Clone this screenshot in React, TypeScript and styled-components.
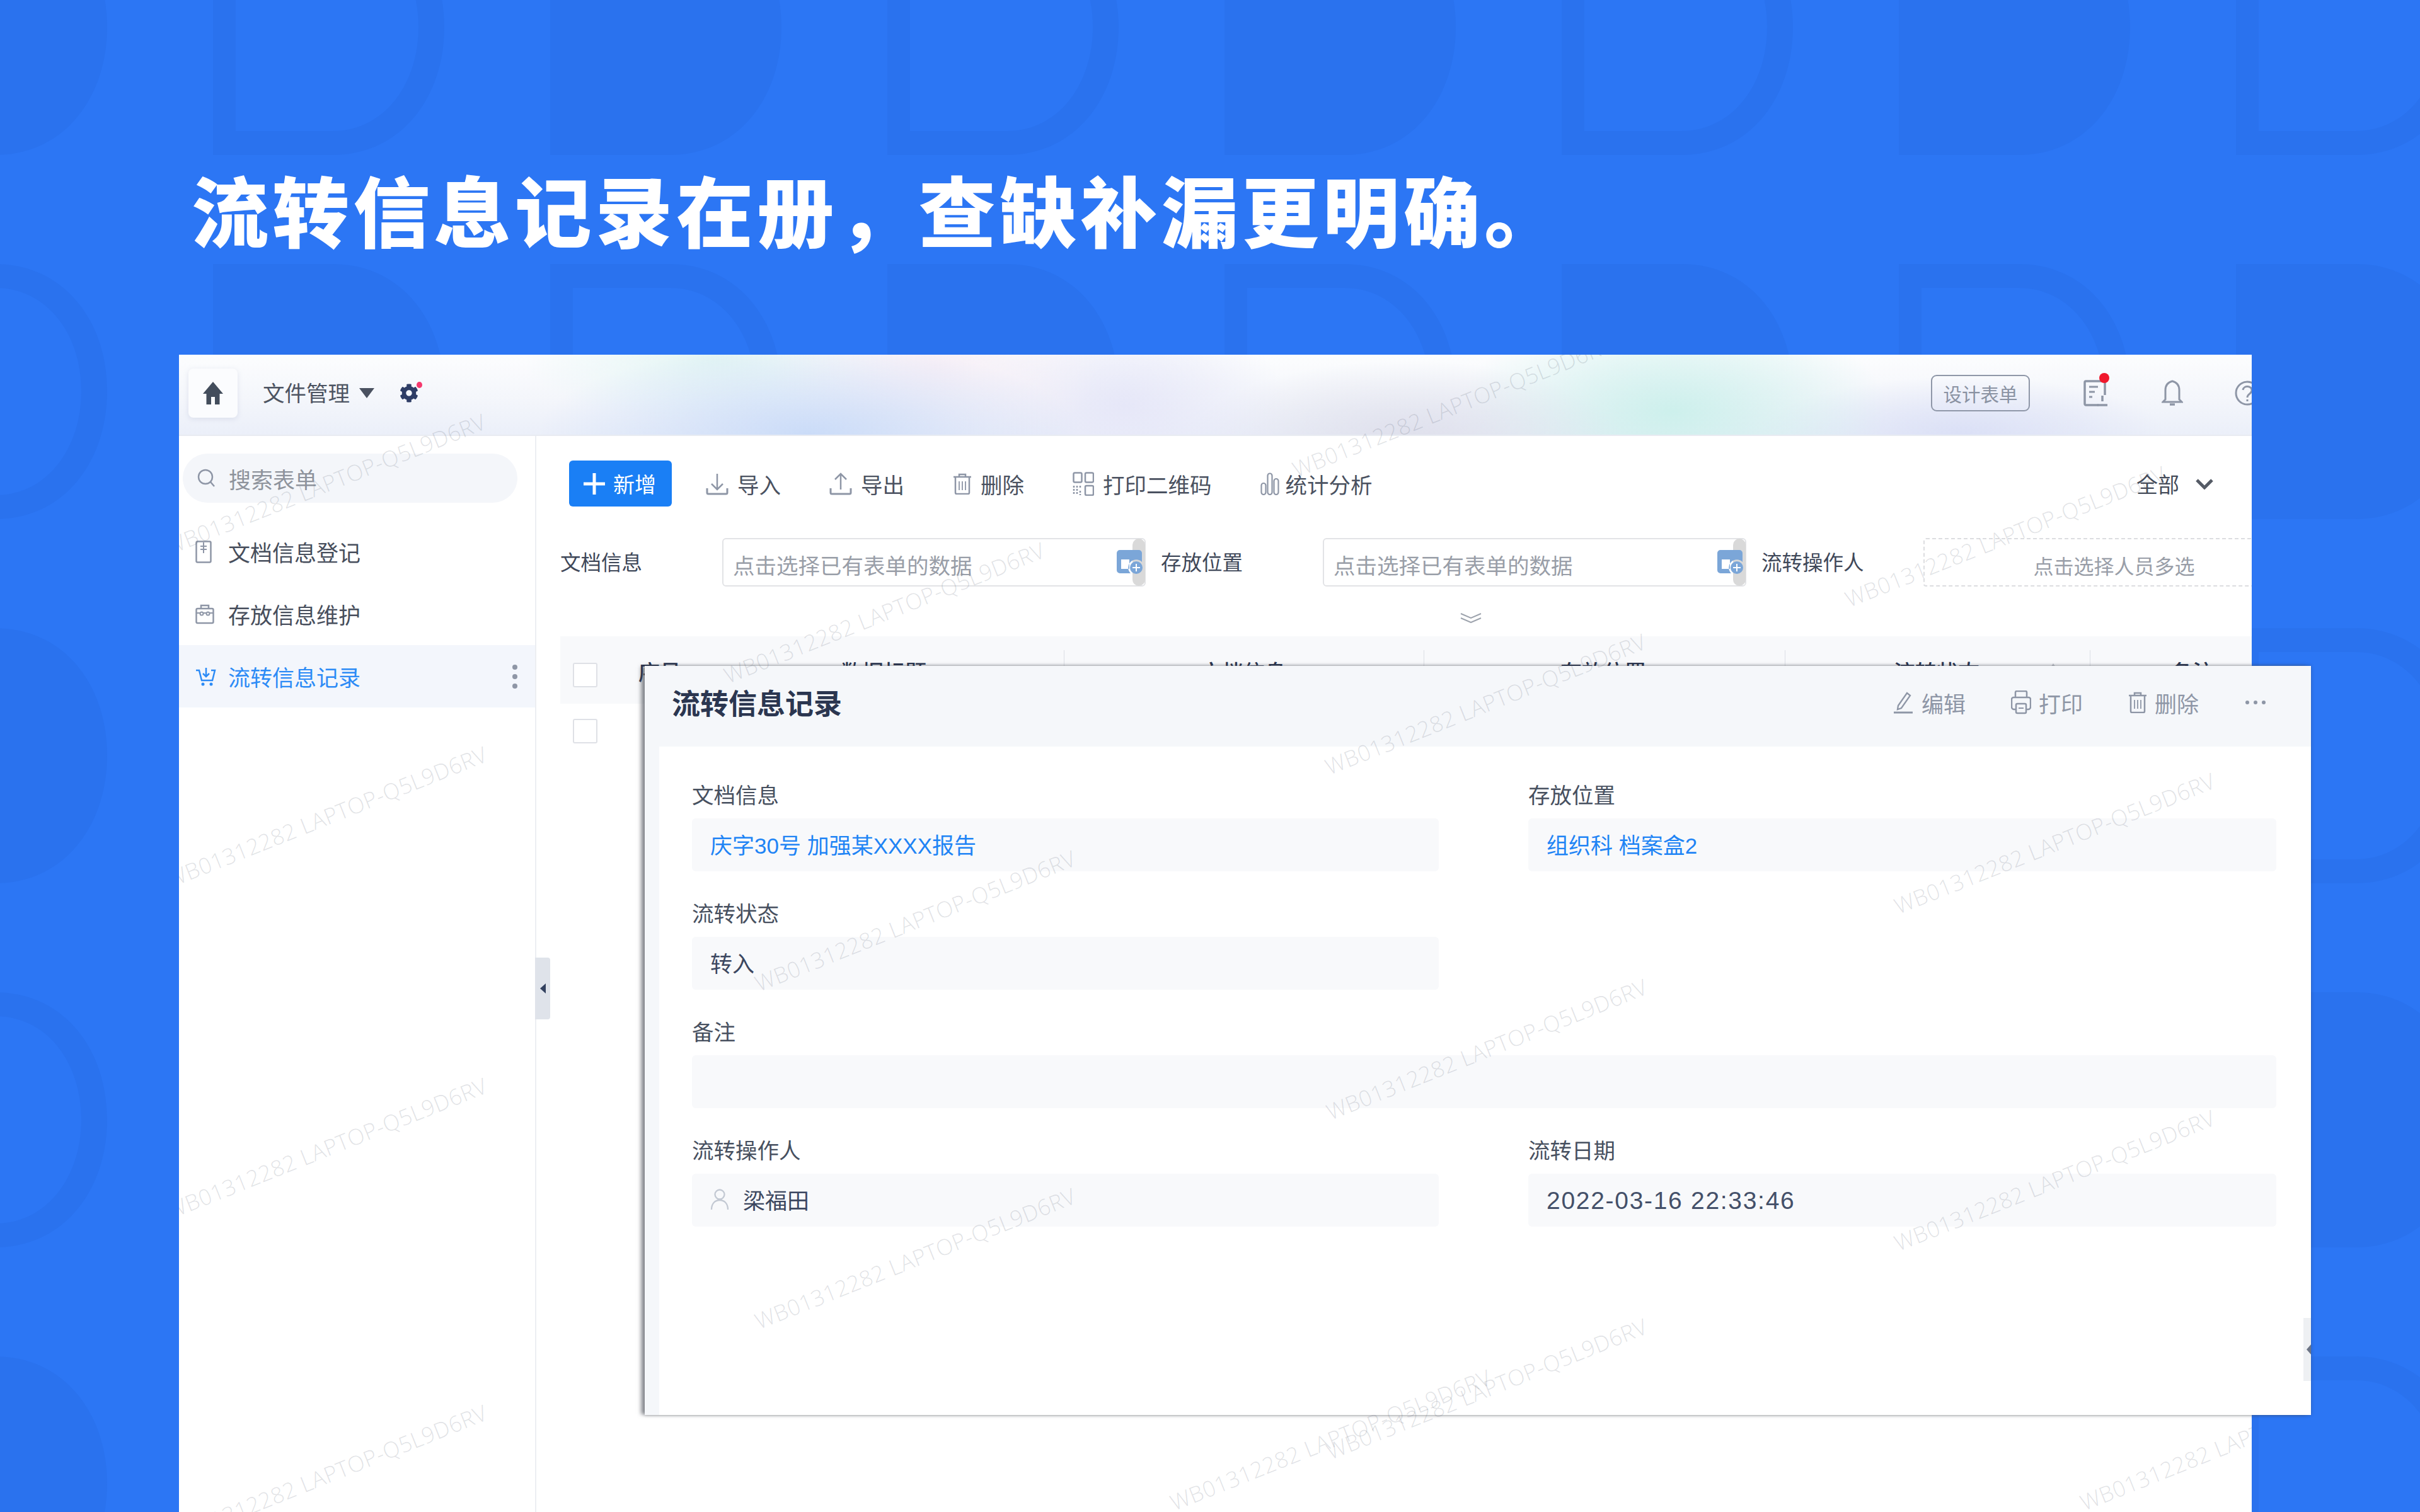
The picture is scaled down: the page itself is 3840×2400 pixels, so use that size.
import React from 'react';
import styled, { createGlobalStyle } from 'styled-components';
import { FaCog } from 'react-icons/fa';

const FONT = `"Liberation Sans", "Noto Sans CJK SC", sans-serif`;
const CJK = `"Noto Sans CJK SC", sans-serif`;
const GREY = '#8e96a6';

const Global = createGlobalStyle`
  html, body { margin: 0; padding: 0; background: #2c76f4; }
  body { font-family: ${FONT}; font-size: 34px; color: #3c4658; }
  * { box-sizing: border-box; }
`;

const Page = styled.div`
  position: relative;
  width: 3840px;
  height: 2400px;
  overflow: hidden;
  background: #2c76f4;
`;
const Pattern = styled.svg`
  position: absolute;
  inset: 0;
  width: 3840px;
  height: 2400px;
`;
const Hero = styled.header`
  position: relative;
  height: 563px;
  padding: 248px 0 0 304px;
`;
const Title = styled.h1`
  margin: 0;
  font-family: ${CJK};
  font-size: 122px;
  line-height: 164px;
  font-weight: 900;
  letter-spacing: 6.2px;
  color: #fff;
  white-space: nowrap;
`;
const AppWindow = styled.div`
  position: relative;
  margin-left: 284px;
  width: 3289px;
  height: 1837px;
  display: flex;
  flex-direction: column;
  overflow: hidden;
  background: #fff;
`;
const TopBar = styled.div`
  height: 129px;
  flex: none;
  display: flex;
  align-items: center;
  padding: 0 0 6px 15px;
  border-bottom: 2px solid #e8ebf1;
  background:
    radial-gradient(ellipse 430px 140px at 1000px 125px, #cbdcf8 0%, rgba(203,220,248,0) 100%),
    radial-gradient(ellipse 260px 150px at 1200px 20px, rgba(246,238,246,.95) 0%, rgba(246,238,246,0) 100%),
    radial-gradient(ellipse 260px 150px at 1500px 80px, #e6e7f8 0%, rgba(230,231,248,0) 100%),
    radial-gradient(ellipse 340px 120px at 1950px 130px, #dfe0ec 0%, rgba(223,224,236,0) 100%),
    radial-gradient(ellipse 340px 170px at 2370px 90px, #cdf0ec 0%, rgba(205,240,236,0) 100%),
    radial-gradient(ellipse 320px 90px at 2830px 125px, #dbe0f6 0%, rgba(219,224,246,0) 100%),
    radial-gradient(ellipse 300px 100px at 850px 10px, #e3f5f4 0%, rgba(227,245,244,0) 100%),
    linear-gradient(180deg, #fcfdfe 0%, #f4f6fb 55%, #ebeff9 100%);
`;
const HomeButton = styled.div`
  width: 78px;
  height: 78px;
  display: flex;
  align-items: center;
  justify-content: center;
  border-radius: 8px;
  background: #fbfcfe;
  box-shadow: 0 2px 8px rgba(120,135,170,.18);
`;
const ModuleName = styled.span`
  margin-left: 40px;
  padding-top: 2px;
  color: #4d5462;
  font-size: 34.500px;
  line-height: 40px;
`;
const Caret = styled.span`
  margin-left: 15px;
  width: 0;
  height: 0;
  border-left: 12px solid transparent;
  border-right: 12px solid transparent;
  border-top: 16px solid #4a5160;
`;
const GearWrap = styled.span`
  position: relative;
  margin-left: 40px;
  display: flex;
  color: #2e3d66;
  font-size: 30px;
`;
const PinkDot = styled.i`
  position: absolute;
  right: -6px;
  top: -3px;
  width: 9px;
  height: 10px;
  border-radius: 50%;
  background: #f5386d;
`;
const Spacer = styled.div`
  flex: 1;
`;
const DesignButton = styled.div`
  width: 157px;
  height: 58px;
  display: flex;
  align-items: center;
  justify-content: center;
  border: 2px solid #8f97a8;
  border-radius: 9px;
  color: #8a92a2;
  font-size: 29.500px;
`;
const BarIcons = styled.div`
  display: flex;
  align-items: center;
`;
const BarIcon = styled.span<{ $ml: number; $mr?: number }>`
  position: relative;
  display: flex;
  margin-left: ${p => p.$ml}px;
  margin-right: ${p => p.$mr ?? 0}px;
`;
const RedDot = styled.i`
  position: absolute;
  right: -3px;
  top: -11px;
  width: 16px;
  height: 16px;
  border-radius: 50%;
  background: #f0182c;
`;
const Main = styled.div`
  flex: 1;
  display: flex;
  min-height: 0;
`;
const Sidebar = styled.aside`
  position: relative;
  width: 567px;
  flex: none;
  padding-top: 28px;
  border-right: 2px solid #eceef2;
  font-size: 35px;
`;
const SearchBox = styled.div`
  width: 531px;
  height: 78px;
  margin-left: 6px;
  padding-left: 22px;
  display: flex;
  align-items: center;
  gap: 21px;
  border-radius: 39px;
  background: #f4f6fa;
  color: #8e939c;
`;
const Menu = styled.nav`
  margin-top: 28px;
`;
const MenuItem = styled.div<{ $active?: boolean }>`
  height: 99px;
  padding-left: 26px;
  display: flex;
  align-items: center;
  color: ${p => (p.$active ? '#2c8bf6' : '#474e5c')};
  background: ${p => (p.$active ? '#f3f6fc' : 'transparent')};
`;
const MenuIcon = styled.span`
  width: 52px;
  display: flex;
`;
const MoreDots = styled.span`
  margin-left: 241px;
  display: flex;
  flex-direction: column;
  gap: 7px;
  & > i {
    width: 8px;
    height: 8px;
    border-radius: 50%;
    background: #8e96a6;
  }
`;
const CollapseTab = styled.div`
  position: absolute;
  left: 100%;
  top: 828px;
  width: 24px;
  height: 98px;
  display: flex;
  align-items: center;
  justify-content: center;
  border-radius: 0 4px 4px 0;
  background: #dfe3ea;
  &::before {
    content: '';
    border-top: 8px solid transparent;
    border-bottom: 8px solid transparent;
    border-right: 9px solid #33415f;
  }
`;
const Content = styled.section`
  flex: 1;
  min-width: 0;
  padding-left: 38px;
`;
const Toolbar = styled.div`
  margin-top: 39px;
  height: 73px;
  padding: 0 61px 0 14px;
  display: flex;
  align-items: center;
  gap: 77px;
`;
const PrimaryButton = styled.div`
  width: 163px;
  height: 73px;
  margin-right: -23px;
  padding-left: 22px;
  display: flex;
  align-items: center;
  gap: 12px;
  border-radius: 6px;
  background: #1a7ff5;
  color: #fff;
`;
const ToolItem = styled.div<{ $gap?: number }>`
  display: flex;
  align-items: center;
  gap: ${p => p.$gap ?? 14}px;
  color: #4a5160;
  font-size: 34.500px;
  padding-top: 1px;
`;
const AllFilter = styled.div`
  margin-left: auto;
  display: flex;
  align-items: center;
  gap: 26px;
  color: #454c5a;
`;
const FilterRow = styled.div`
  margin-top: 50px;
  height: 77px;
  display: flex;
  align-items: center;
  white-space: nowrap;
`;
const FilterLabel = styled.span<{ $first?: boolean }>`
  width: 257px;
  flex: none;
  margin-left: ${p => (p.$first ? 0 : 24)}px;
  padding-bottom: 4px;
  font-size: 32.500px;
  color: #3f4859;
`;
const DataInput = styled.div`
  position: relative;
  width: 672px;
  height: 77px;
  flex: none;
  padding: 7px 0 0 15px;
  display: flex;
  align-items: center;
  border: 2px solid #e2e3e6;
  border-radius: 6px;
  font-size: 34.500px;
  color: #999ea8;
`;
const Thumb = styled.i`
  position: absolute;
  right: -1px;
  top: -1px;
  bottom: -1px;
  width: 20px;
  border-radius: 10px;
  background: #d9d9d9;
`;
const PickIcon = styled.span`
  position: absolute;
  right: 3px;
  top: 17px;
  display: flex;
`;
const PeopleInput = styled.div`
  width: 605px;
  height: 77px;
  flex: none;
  padding-top: 9px;
  display: flex;
  align-items: center;
  justify-content: center;
  border: 2px dashed #dcdde0;
  border-radius: 4px;
  font-size: 32px;
  color: #999ea8;
`;
const ExpandRow = styled.div`
  height: 79px;
  padding: 20px 0 0 1428px;
  display: flex;
  align-items: center;
`;
const TableHead = styled.div`
  height: 107px;
  display: grid;
  grid-template-columns: 124px 321px 354px 571px 573px 484px 258px;
  background: #f8f9fb;
  color: #2b3650;
  font-weight: 500;
`;
const CheckCell = styled.div`
  padding: 42px 0 0 20px;
`;
const HeadCell = styled.div<{ $pad: number; $rule?: boolean }>`
  position: relative;
  padding: 34px 0 0 ${p => p.$pad}px;
  display: flex;
  align-items: flex-start;
  line-height: 44px;
  font-family: ${CJK};
  &::before {
    content: '';
    display: ${p => (p.$rule ? 'block' : 'none')};
    position: absolute;
    left: 0;
    top: 22px;
    height: 60px;
    width: 1px;
    background: #dcdfe5;
  }
`;
const SortMark = styled.i`
  margin: 9px 0 0 109px;
  border-left: 8px solid transparent;
  border-right: 8px solid transparent;
  border-bottom: 12px solid #c3c7cf;
`;
const BodyRow = styled.div`
  height: 86px;
  padding: 24px 0 0 20px;
`;
const CheckBox = styled.div`
  width: 39px;
  height: 39px;
  border: 2px solid #dfe1e6;
  border-radius: 3px;
  background: #fff;
`;
const Modal = styled.div`
  position: absolute;
  z-index: 3;
  left: 1023px;
  top: 1057px;
  width: 2644px;
  height: 1189px;
  display: flex;
  flex-direction: column;
  background: #fff;
  box-shadow: -7px 0 6px -1px rgba(60,64,72,.55), 0 0 5px rgba(50,55,65,.4);
`;
const ModalHead = styled.div`
  height: 128px;
  flex: none;
  padding: 0 72px 12px 43px;
  display: flex;
  align-items: center;
  background: #f5f7fa;
`;
const ModalTitle = styled.h2`
  margin: 0;
  font-family: ${CJK};
  font-size: 45px;
  line-height: 60px;
  font-weight: 700;
  color: #2b3650;
`;
const Actions = styled.div`
  margin-left: auto;
  display: flex;
  align-items: center;
  gap: 72px;
`;
const Action = styled.div`
  display: flex;
  align-items: center;
  gap: 12px;
  color: #8e96a6;
  font-size: 35px;
`;
const Ellipsis = styled.span`
  display: flex;
  margin-left: 2px;
  gap: 7px;
  & > i {
    width: 6px;
    height: 6px;
    border-radius: 50%;
    background: #8e96a6;
  }
`;
const ModalBody = styled.div`
  flex: 1;
  margin-left: 23px;
  padding: 40px 55px 0 52px;
  position: relative;
  &::before {
    content: '';
    position: absolute;
    left: -23px;
    top: 0;
    bottom: 0;
    width: 23px;
    background: #f5f7fa;
  }
`;
const FieldGrid = styled.div`
  display: grid;
  grid-template-columns: 1185px 1187px;
  column-gap: 142px;
  row-gap: 30px;
`;
const Field = styled.div<{ $wide?: boolean }>`
  grid-column: ${p => (p.$wide ? '1 / -1' : 'auto')};
`;
const FieldLabel = styled.div`
  height: 74px;
  line-height: 76px;
  font-size: 34.500px;
  color: #47505f;
`;
const FieldValue = styled.div<{ $link?: boolean }>`
  height: 84px;
  padding: 0 0 3px 29px;
  display: flex;
  align-items: center;
  gap: 22px;
  border-radius: 6px;
  background: #f8f9fb;
  font-size: 35px;
  color: ${p => (p.$link ? '#1f84f5' : '#3c4760')};
`;
const DateValue = styled.span`
  font-size: 39px;
  letter-spacing: 1.700px;
  padding-top: 5px;
  color: #445069;
`;
const EdgeTab = styled.div`
  position: absolute;
  right: 0;
  top: 1035px;
  width: 12px;
  height: 100px;
  display: flex;
  align-items: center;
  justify-content: flex-end;
  background: #eef0f3;
  &::before {
    content: '';
    border-top: 8px solid transparent;
    border-bottom: 8px solid transparent;
    border-right: 7px solid #6c7485;
  }
`;
const MarkLayer = styled.div`
  position: absolute;
  z-index: 5;
  left: 284px;
  top: 563px;
  width: 3289px;
  height: 1837px;
  overflow: hidden;
  pointer-events: none;
`;
const Mark = styled.span<{ $x: number; $y: number }>`
  position: absolute;
  left: ${p => p.$x - 284}px;
  top: ${p => p.$y - 563}px;
  transform: translate(-50%, -50%) rotate(-21.8deg);
  white-space: nowrap;
  font-family: "Open Sans", sans-serif;
  font-size: 35px;
  font-weight: 300;
  letter-spacing: 0.6px;
  color: rgba(70, 80, 100, .17);
`;

type IP = { c?: string };
const S = ({ w, h, children }: { w: number; h: number; children: React.ReactNode }) => (
  <svg width={w} height={h} viewBox={`0 0 ${w} ${h}`} fill="none" style={{ flex: 'none', display: 'block' }}>{children}</svg>
);
const HomeIcon = () => <S w={36} h={38}><path d="M18 1 34 20h-5.500v17H21V25h-6v12H7.500V20H2Z" fill="#434d5c" /></S>;
const SearchIcon = () => <S w={30} h={30}><circle cx="14" cy="13" r="11" stroke="#8e96a6" strokeWidth="2.500" /><path d="m22 21 6 7" stroke="#8e96a6" strokeWidth="2.500" /></S>;
const DocIcon = () => <S w={26} h={36}><rect x="1.500" y="1.500" width="23" height="33" rx="2" stroke={GREY} strokeWidth="2.500" /><path d="M13 3v17M8 9h10M8 14h10" stroke={GREY} strokeWidth="2" /></S>;
const BoxIcon = () => <S w={30} h={32}><path d="M9 7V2h12v5" stroke={GREY} strokeWidth="2.500" /><rect x="1.500" y="7" width="27" height="23" rx="2" stroke={GREY} strokeWidth="2.500" /><path d="M2 14h6m4 0h6m4 0h6" stroke={GREY} strokeWidth="2" /><circle cx="10" cy="15" r="2.500" stroke={GREY} strokeWidth="2" /><circle cx="20" cy="15" r="2.500" stroke={GREY} strokeWidth="2" /></S>;
const CartIcon = () => <S w={34} h={32}><path d="M1 6h5l4 16h17l4-16h-6M17 2v14m-5-5 5 5 5-5" stroke="#2c8bf6" strokeWidth="2.500" /><circle cx="12" cy="28" r="2.500" fill="#2c8bf6" /><circle cx="25" cy="28" r="2.500" fill="#2c8bf6" /></S>;
const DownIcon = () => <S w={36} h={36}><path d="M18 2v24M9 18l9 9 9-9" stroke={GREY} strokeWidth="2.500" /><path d="M2 25v7a2 2 0 0 0 2 2h28a2 2 0 0 0 2-2v-7" stroke={GREY} strokeWidth="3" /></S>;
const UpIcon = () => <S w={36} h={36}><path d="M18 27V3M9 11l9-9 9 9" stroke={GREY} strokeWidth="2.500" /><path d="M2 25v7a2 2 0 0 0 2 2h28a2 2 0 0 0 2-2v-7" stroke={GREY} strokeWidth="3" /></S>;
const TrashIcon = ({ c = GREY }: IP) => <S w={30} h={34}><path d="M10 5V2h10v3M1 6h28" stroke={c} strokeWidth="2.500" /><path d="M4 7v24a2 2 0 0 0 2 2h18a2 2 0 0 0 2-2V7" stroke={c} strokeWidth="2.500" /><path d="M10 13v14M15 13v14M20 13v14" stroke={c} strokeWidth="1.800" /></S>;
const QrIcon = () => <S w={34} h={38}><rect x="1.500" y="1.500" width="13" height="15" rx="2" stroke={GREY} strokeWidth="2.500" /><rect x="20" y="1.500" width="13" height="15" rx="2" stroke={GREY} strokeWidth="2.500" /><rect x="20" y="22" width="13" height="15" rx="2" stroke={GREY} strokeWidth="2.500" /><path d="M2 22v15M7 22v15M12 22v4m0 4v7" stroke={GREY} strokeWidth="2.500" strokeDasharray="3 2" /></S>;
const StatsIcon = () => <S w={30} h={36}><rect x="1.500" y="17" width="7" height="18" rx="3.500" stroke={GREY} strokeWidth="2.200" /><rect x="11.500" y="1.500" width="7" height="33.500" rx="3.500" stroke={GREY} strokeWidth="2.200" /><rect x="21.500" y="10" width="7" height="25" rx="3.500" stroke={GREY} strokeWidth="2.200" /></S>;
const ChevronIcon = () => <S w={28} h={18}><path d="M2 3 14 15 26 3" stroke="#555b66" strokeWidth="5" /></S>;
const DoubleChevron = () => <S w={34} h={16}><path d="m1 1 16 7 16-7M1 8l16 7 16-7" stroke="#9da3ad" strokeWidth="2" /></S>;
const PickerIcon = () => <S w={41} h={40}><path d="M5 0h30a5 5 0 0 1 5 5v14a12 12 0 0 0-18 18H5a5 5 0 0 1-5-5V5a5 5 0 0 1 5-5Zm2 11v19h13V11Z" fill="#7ba6d8" fillRule="evenodd" /><path d="M7 7h26v8H7Z" fill="#7ba6d8" /><circle cx="31" cy="28" r="10" fill="#7ba6d8" /><path d="M31 22v12M25 28h12" stroke="#fff" strokeWidth="2" /></S>;
const FormIcon = () => <S w={38} h={42}><path d="M24 40h-20a2 2 0 0 1-2-2V4a2 2 0 0 1 2-2h28a2 2 0 0 1 2 2v20" stroke={GREY} strokeWidth="3.500" /><path d="M9 11h14M9 19h9M9 27h5" stroke={GREY} strokeWidth="3" /><path d="M30 25v9m-8 6h16" stroke={GREY} strokeWidth="3.500" /></S>;
const BellIcon = () => <S w={34} h={44}><path d="M17 3c-7 2-11 7-11 14v15l-4 4h30l-4-4V17c0-7-4-12-11-14Z" stroke={GREY} strokeWidth="3" /><path d="M13 40h8" stroke={GREY} strokeWidth="3.500" /></S>;
const HelpIcon = () => <S w={40} h={40}><circle cx="20" cy="20" r="18" stroke={GREY} strokeWidth="3" /><path d="M13 15c1-8 15-7 14 1-1 6-7 5-7 11M20 30v3" stroke={GREY} strokeWidth="3" /></S>;
const PenIcon = () => <S w={33} h={36}><path d="M8 23 22 3l5 4-14 20-6 2Z" stroke={GREY} strokeWidth="2.300" /><path d="M1 34h30" stroke={GREY} strokeWidth="3" /></S>;
const PrintIcon = () => <S w={32} h={38}><path d="M7 11V3a2 2 0 0 1 2-2h14a2 2 0 0 1 2 2v8" stroke={GREY} strokeWidth="2.500" /><path d="M7 30H5a4 4 0 0 1-4-4V14a3 3 0 0 1 3-3h24a3 3 0 0 1 3 3v12a4 4 0 0 1-4 4h-2" stroke={GREY} strokeWidth="2.500" /><rect x="8" y="21" width="16" height="15" rx="2" stroke={GREY} strokeWidth="2.500" /><path d="M12 28h8" stroke={GREY} strokeWidth="2" /></S>;
const UserIcon = () => <S w={30} h={36}><circle cx="15" cy="10" r="7.500" stroke="#c3c9d3" strokeWidth="2.300" /><path d="M2 34c0-9 5-15 13-15s13 6 13 15" stroke="#c3c9d3" strokeWidth="2.300" /></S>;

const D_OUTER = 'M0 0H190C298 0 367 90 367 202S298 405 190 405H0Z';
const D_INNER = 'M36 38H190C272 38 326 112 326 202S272 367 190 367H36Z';
const patternCells = [0, 1, 2, 3, 4].flatMap(r =>
  [0, 1, 2, 3, 4, 5, 6, 7].map(k => ({ r, k, x: 170 + 535 * k - 367, y: -159 + 578 * r }))
);

const MARKS: [number, number][] = [
  [516, 768], [518, 1296], [518, 1822], [518, 2341],
  [1403, 972], [1452, 1461], [1452, 1997],
  [2305, 645], [2357, 1117], [2359, 1665], [2359, 2204], [2111, 2285],
  [3182, 851], [3260, 1338], [3260, 1873], [3555, 2285],
];

const heads: { t: string; pad: number; rule?: boolean; sort?: boolean }[] = [
  { t: '序号', pad: 0 },
  { t: '数据标题', pad: 0 },
  { t: '文档信息', pad: 217, rule: true },
  { t: '存放位置', pad: 217, rule: true },
  { t: '流转状态', pad: 173, rule: true, sort: true },
  { t: '备注', pad: 129, rule: true },
];

export default function App() {
  return (
    <Page>
      <Global />
      <Pattern viewBox="0 0 3840 2400">
        {patternCells.map(({ r, k, x, y }) => (
          <path
            key={`${r}-${k}`}
            transform={`translate(${x} ${y})`}
            d={(r + k) % 2 === 0 ? D_OUTER : `${D_OUTER}${D_INNER}`}
            fillRule="evenodd"
            fill="#2a72ee"
          />
        ))}
      </Pattern>
      <Hero>
        <Title>流转信息记录在册，查缺补漏更明确。</Title>
      </Hero>
      <AppWindow>
        <TopBar>
          <HomeButton><HomeIcon /></HomeButton>
          <ModuleName>文件管理</ModuleName>
          <Caret />
          <GearWrap><FaCog /><PinkDot /></GearWrap>
          <Spacer />
          <DesignButton>设计表单</DesignButton>
          <BarIcons>
            <BarIcon $ml={85}><FormIcon /><RedDot /></BarIcon>
            <BarIcon $ml={86}><BellIcon /></BarIcon>
            <BarIcon $ml={82} $mr={-13}><HelpIcon /></BarIcon>
          </BarIcons>
        </TopBar>
        <Main>
          <Sidebar>
            <SearchBox><SearchIcon />搜索表单</SearchBox>
            <Menu>
              <MenuItem><MenuIcon><DocIcon /></MenuIcon>文档信息登记</MenuItem>
              <MenuItem><MenuIcon><BoxIcon /></MenuIcon>存放信息维护</MenuItem>
              <MenuItem $active>
                <MenuIcon><CartIcon /></MenuIcon>流转信息记录
                <MoreDots><i /><i /><i /></MoreDots>
              </MenuItem>
            </Menu>
            <CollapseTab />
          </Sidebar>
          <Content>
            <Toolbar>
              <PrimaryButton>
                <S w={36} h={36}><path d="M18 1v34M1 18h34" stroke="#fff" strokeWidth="5" /></S>
                新增
              </PrimaryButton>
              <ToolItem><DownIcon />导入</ToolItem>
              <ToolItem><UpIcon />导出</ToolItem>
              <ToolItem><TrashIcon />删除</ToolItem>
              <ToolItem><QrIcon />打印二维码</ToolItem>
              <ToolItem $gap={10}><StatsIcon />统计分析</ToolItem>
              <AllFilter>全部<ChevronIcon /></AllFilter>
            </Toolbar>
            <FilterRow>
              <FilterLabel $first>文档信息</FilterLabel>
              <DataInput>点击选择已有表单的数据<Thumb /><PickIcon><PickerIcon /></PickIcon></DataInput>
              <FilterLabel>存放位置</FilterLabel>
              <DataInput>点击选择已有表单的数据<Thumb /><PickIcon><PickerIcon /></PickIcon></DataInput>
              <FilterLabel>流转操作人</FilterLabel>
              <PeopleInput>点击选择人员多选</PeopleInput>
            </FilterRow>
            <ExpandRow><DoubleChevron /></ExpandRow>
            <TableHead>
              <CheckCell><CheckBox /></CheckCell>
              {heads.map(h => (
                <HeadCell key={h.t} $pad={h.pad} $rule={h.rule}>
                  {h.t}
                  {h.sort && <SortMark />}
                </HeadCell>
              ))}
            </TableHead>
            <BodyRow><CheckBox /></BodyRow>
          </Content>
        </Main>
      </AppWindow>
      <Modal>
        <ModalHead>
          <ModalTitle>流转信息记录</ModalTitle>
          <Actions>
            <Action><PenIcon />编辑</Action>
            <Action><PrintIcon />打印</Action>
            <Action><TrashIcon />删除</Action>
            <Ellipsis><i /><i /><i /></Ellipsis>
          </Actions>
        </ModalHead>
        <ModalBody>
          <FieldGrid>
            <Field>
              <FieldLabel>文档信息</FieldLabel>
              <FieldValue $link>庆字30号 加强某XXXX报告</FieldValue>
            </Field>
            <Field>
              <FieldLabel>存放位置</FieldLabel>
              <FieldValue $link>组织科 档案盒2</FieldValue>
            </Field>
            <Field>
              <FieldLabel>流转状态</FieldLabel>
              <FieldValue>转入</FieldValue>
            </Field>
            <Field />
            <Field $wide>
              <FieldLabel>备注</FieldLabel>
              <FieldValue />
            </Field>
            <Field>
              <FieldLabel>流转操作人</FieldLabel>
              <FieldValue><UserIcon />梁福田</FieldValue>
            </Field>
            <Field>
              <FieldLabel>流转日期</FieldLabel>
              <FieldValue><DateValue>2022-03-16 22:33:46</DateValue></FieldValue>
            </Field>
          </FieldGrid>
        </ModalBody>
        <EdgeTab />
      </Modal>
      <MarkLayer>
        {MARKS.map(([x, y]) => (
          <Mark key={`${x}-${y}`} $x={x} $y={y}>WB01312282 LAPTOP-Q5L9D6RV</Mark>
        ))}
      </MarkLayer>
    </Page>
  );
}
